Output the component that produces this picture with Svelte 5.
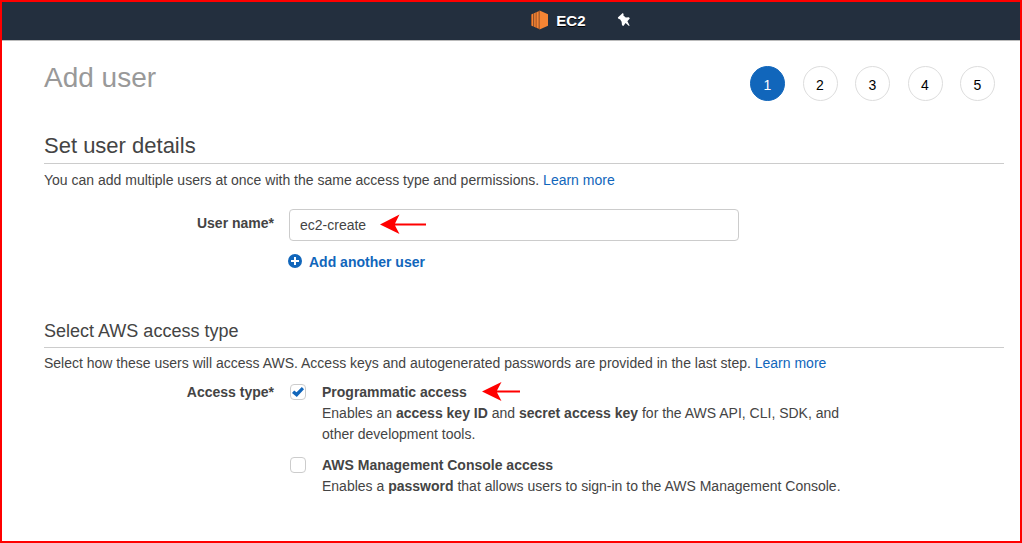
<script lang="ts">
	/**
	 * Add user wizard, step 1: user details and AWS access type
	 */

	const steps = [1, 2, 3, 4, 5];
	let currentStep = $state(1);
	let userName = $state('ec2-create');
	let programmatic = $state(true);
	let consoleAccess = $state(false);
</script>

<div class="frame">
	<nav class="navbar">
		<a class="service" href="#ec2">
			<svg class="ec2-icon" viewBox="0 0 18 20">
				<path fill="#9d5025" d="M0 4.5 2 3.7V16.3L0 15.5Z" />
				<path fill="#f58534" d="M.8 4.2 2.4 3.6V16.4L.8 15.8Z" />
				<path fill="#9d5025" d="M2.4 3.6 5 2.5V17.5L2.4 16.4Z" />
				<path fill="#f58534" d="M3.2 3.3 4.8 2.6V17.4L3.2 16.7Z" />
				<path fill="#9d5025" d="M4.8 2.5 8.8 .5V19.5L4.8 17.5Z" />
				<path fill="#f58534" d="M5.6 2.3 7.6 1.6V18.4L5.6 17.7Z" />
				<path fill="#f58534" d="M8.6 .5 17 4.3V15.7L8.6 19.5Z" />
			</svg>
			<span>EC2</span>
		</a>
		<button class="pin" type="button" aria-label="Pin shortcuts">
			<svg viewBox="0 0 14 14">
				<path
					fill="#fff"
					d="M5.8 0 6.6 1 6.4 2.4 8.8 4.4 12 4.2 12.8 5.6 10.4 8.2 12.6 12.4 12 12.9 8.6 10 6.4 13 5 12.2 4.6 8.8 3 6.2 1.6 6 .8 4.6Z"
				/>
			</svg>
		</button>
	</nav>

	<main>
		<header>
			<h1>Add user</h1>
			<ol class="steps">
				{#each steps as step}
					<li class="step" class:active={step === currentStep}>{step}</li>
				{/each}
			</ol>
		</header>

		<section class="details">
			<h2>Set user details</h2>
			<p>
				You can add multiple users at once with the same access type and permissions.
				<a href="#users">Learn more</a>
			</p>
			<div class="row">
				<label class="row-label" for="user-name">User name*</label>
				<div class="field">
					<input id="user-name" class="text-input" type="text" bind:value={userName} />
					<svg class="arrow input-arrow" viewBox="0 0 46 20">
						<path fill="#f00" d="M0 10.5 19.5 .5 15 9.5H46V11.5H15L19.5 20Z" />
					</svg>
				</div>
			</div>
			<button class="add-user" type="button">
				<svg viewBox="0 0 14 14">
					<circle cx="7" cy="7" r="7" fill="#16b" />
					<path d="M7 3V11M3 7H11" stroke="#fff" stroke-width="2" />
				</svg>
				<span>Add another user</span>
			</button>
		</section>

		<section class="access">
			<h3>Select AWS access type</h3>
			<p>
				Select how these users will access AWS. Access keys and autogenerated passwords are provided in the last step.
				<a href="#access">Learn more</a>
			</p>
			<div class="row access-row">
				<span class="row-label" id="access-type">Access type*</span>
				<div class="options" role="group" aria-labelledby="access-type">
					<div class="option">
						<input id="programmatic" type="checkbox" bind:checked={programmatic} />
						<div>
							<div class="option-title">
								<label for="programmatic">Programmatic access</label>
								<svg class="arrow title-arrow" viewBox="0 0 38 20">
									<path fill="#f00" d="M0 9.5 19.5 0 15 8.5H38V10.5H15L19.5 19Z" />
								</svg>
							</div>
							<p>
								Enables an <b>access key ID</b> and <b>secret access key</b> for the AWS API, CLI, SDK, and
								other development tools.
							</p>
						</div>
					</div>
					<div class="option">
						<input id="console" type="checkbox" bind:checked={consoleAccess} />
						<div>
							<div class="option-title">
								<label for="console">AWS Management Console access</label>
							</div>
							<p>
								Enables a <b>password</b> that allows users to sign-in to the AWS Management Console.
							</p>
						</div>
					</div>
				</div>
			</div>
		</section>
	</main>
</div>

<style>
	:global(body) {
		margin: 0;
		background: #fff;
	}

	.frame {
		box-sizing: border-box;
		min-height: 100vh;
		border: 2px solid #f00;
		font: 14px/21px "Liberation Sans", Arial, sans-serif;
		color: #444;
	}

	svg {
		display: block;
	}

	a {
		color: #16b;
		text-decoration: none;
	}

	button {
		padding: 0;
		border: none;
		background: none;
		font: inherit;
		cursor: pointer;
	}

	h1,
	h2,
	h3,
	p,
	ol {
		margin: 0;
		padding: 0;
		font-weight: normal;
	}

	.navbar {
		box-sizing: border-box;
		display: flex;
		align-items: center;
		gap: 31px;
		height: 39px;
		padding: 0 0 2px 52%;
		background: #232f3e;
		border-bottom: 1px solid #bbb;
	}

	.service {
		display: flex;
		align-items: center;
		gap: 7px;
		color: #fff;
		font-size: 15px;
		font-weight: bold;
		text-shadow: 0 1px 0 #000;
	}

	.ec2-icon {
		width: 18px;
		height: 20px;
	}

	.pin svg {
		width: 14px;
		height: 14px;
	}

	main {
		padding: 18px 16px 0 42px;
	}

	header {
		display: flex;
		justify-content: space-between;
		padding-right: 9px;
	}

	h1 {
		font-size: 28px;
		line-height: 38px;
		color: #999;
	}

	.steps {
		display: flex;
		justify-content: space-between;
		width: 245px;
		padding-top: 7px;
		list-style: none;
	}

	.step {
		box-sizing: border-box;
		width: 35px;
		height: 35px;
		padding-top: 2px;
		border: 1px solid #ddd;
		border-radius: 50%;
		line-height: 33px;
		text-align: center;
		color: #000;
	}

	.step.active {
		background: #16b;
		border-color: #16b;
		color: #fff;
	}

	h2,
	h3 {
		border-bottom: 1px solid #ccc;
		padding-bottom: 3px;
	}

	h2 {
		margin-bottom: 6px;
		font-size: 22px;
		line-height: 28px;
	}

	h3 {
		margin-bottom: 5px;
		font-size: 18px;
		line-height: 26px;
	}

	.details {
		margin-top: 31px;
	}

	.access {
		margin-top: 45px;
	}

	.row {
		display: flex;
		gap: 15px;
		margin-top: 18px;
	}

	.row-label {
		flex: none;
		width: 230px;
		font-weight: bold;
		text-align: right;
	}

	.row > label {
		padding-top: 4px;
	}

	.field {
		position: relative;
		flex: 0 1 450px;
	}

	.text-input {
		box-sizing: border-box;
		display: block;
		width: 100%;
		height: 32px;
		padding: 0 10px;
		border: 1px solid #ccc;
		border-radius: 4px;
		font: inherit;
		color: #444;
	}

	.arrow {
		height: 20px;
	}

	.input-arrow {
		position: absolute;
		top: 5px;
		left: 91px;
		width: 46px;
	}

	.title-arrow {
		width: 38px;
	}

	.add-user {
		display: flex;
		align-items: flex-start;
		gap: 7px;
		margin: 11px 0 0 244px;
		color: #16b;
		font-weight: bold;
	}

	.add-user svg {
		width: 14px;
		height: 14px;
		margin-top: 2px;
	}

	.access-row {
		margin-top: 8px;
	}

	.options {
		display: flex;
		flex-direction: column;
		gap: 10px;
		max-width: 560px;
		padding-left: 1px;
	}

	.option {
		display: flex;
		align-items: flex-start;
		gap: 16px;
	}

	.option-title {
		display: flex;
		gap: 15px;
		height: 21px;
		font-weight: bold;
	}

	input[type='checkbox'] {
		appearance: none;
		flex: none;
		display: grid;
		place-items: center;
		width: 16px;
		height: 16px;
		margin: 2px 0 0;
		border: 1px solid #ccc;
		border-radius: 4px;
		background: #fff;
	}

	input[type='checkbox']:checked::before {
		content: '';
		width: 12px;
		height: 10px;
		background: #16b;
		clip-path: polygon(0 60%, 18% 36%, 38% 52%, 82% 0, 100% 22%, 40% 100%);
	}
</style>
